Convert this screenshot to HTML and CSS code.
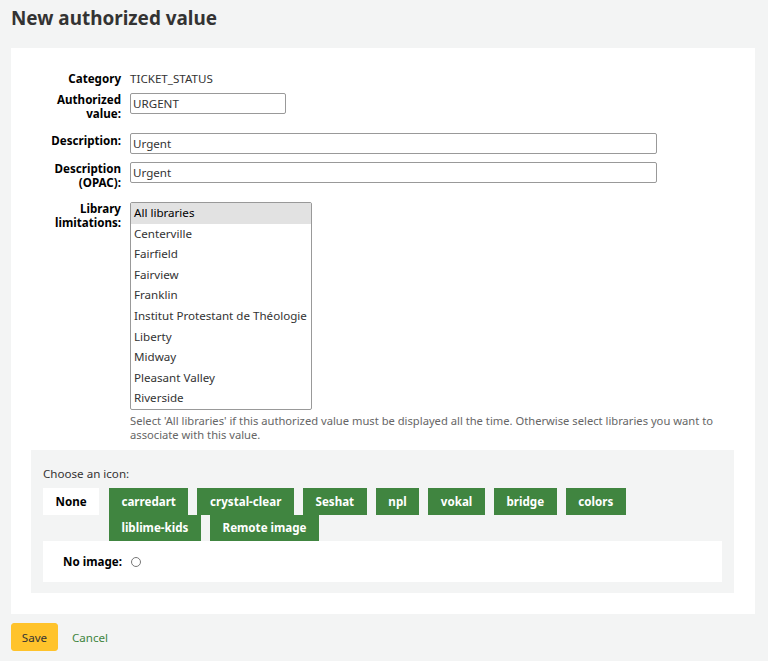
FILE: index.html
```html
<!DOCTYPE html>
<html>
<head>
<meta charset="utf-8">
<link rel="stylesheet" href="styles.css">
</head>
<body>
<main class="page">
  <h1 class="title">New authorized value</h1>
  <form class="panel">
    <ol class="rows">
      <li class="row">
        <span class="lbl">Category</span>
        <span class="val">TICKET_STATUS</span>
      </li>
      <li class="row">
        <label class="lbl two">Authorized value:</label>
        <input class="inp short" type="text" value="URGENT">
      </li>
      <li class="row">
        <label class="lbl">Description:</label>
        <input class="inp long" type="text" value="Urgent">
      </li>
      <li class="row">
        <label class="lbl two">Description (OPAC):</label>
        <input class="inp long" type="text" value="Urgent">
      </li>
      <li class="row">
        <label class="lbl two">Library limitations:</label>
        <div class="field">
          <div class="listbox">
            <div class="opt sel">All libraries</div>
            <div class="opt">Centerville</div>
            <div class="opt">Fairfield</div>
            <div class="opt">Fairview</div>
            <div class="opt">Franklin</div>
            <div class="opt">Institut Protestant de Théologie</div>
            <div class="opt">Liberty</div>
            <div class="opt">Midway</div>
            <div class="opt">Pleasant Valley</div>
            <div class="opt">Riverside</div>
          </div>
          <div class="hint">Select 'All libraries' if this authorized value must be displayed all the time. Otherwise select libraries you want to associate with this value.</div>
        </div>
      </li>
    </ol>
    <div class="icons">
      <div class="choose">Choose an icon:</div>
      <div class="tabs">
        <span class="tab active">None</span>
        <div class="tabset">
          <span class="tab">carredart</span>
          <span class="tab">crystal-clear</span>
          <span class="tab">Seshat</span>
          <span class="tab">npl</span>
          <span class="tab">vokal</span>
          <span class="tab">bridge</span>
          <span class="tab">colors</span>
          <span class="tab">liblime-kids</span>
          <span class="tab">Remote image</span>
        </div>
      </div>
      <div class="tabpanel">
        <span class="lbl noimg">No image:</span>
        <span class="radio"></span>
      </div>
    </div>
  </form>
  <div class="actions">
    <button class="save" type="button">Save</button>
    <a class="cancel" href="#">Cancel</a>
  </div>
</main>
</body>
</html>
```

FILE: styles.css
```css
html, body {
  margin: 0;
  padding: 0;
  background: #f3f4f4;
}
body {
  font-family: "Noto Sans", "DejaVu Sans", sans-serif;
  font-size: 11.6px;
  color: #333;
}
.page {
  padding: 0 13px 0 11px;
}
.title {
  margin: 0;
  padding-top: 4px;
  height: 48px;
  font-size: 18.9px;
  font-weight: 700;
  line-height: 28px;
  color: #333;
  box-sizing: border-box;
}
.panel {
  display: block;
  background: #fff;
  padding: 23px 21px 21px 20px;
}
.rows {
  list-style: none;
  margin: 0;
  padding: 0;
  display: flex;
  flex-direction: column;
  gap: 8px;
}
.row {
  display: flex;
  align-items: flex-start;
}
.row:first-child {
  padding-top: 1px;
  margin-bottom: -1px;
}
.lbl {
  width: 90px;
  margin-right: 9px;
  flex: none;
  text-align: right;
  font-weight: 700;
  color: #000;
  line-height: 14px;
}
.lbl.two {
  padding-bottom: 4px;
}
.val {
  line-height: 14px;
  color: #333;
}
.inp {
  font-family: inherit;
  font-size: 11.6px;
  color: #333;
  height: 21px;
  box-sizing: border-box;
  border: 1px solid #999;
  border-radius: 2px;
  padding: 0 2px;
  margin: 0;
  background: #fff;
  outline: none;
}
.inp.short { width: 156px; }
.inp.long { width: 527px; }
.row:nth-child(3) .lbl { padding-top: 1px; }
.field {
  display: flex;
  flex-direction: column;
}
.listbox {
  width: 182px;
  height: 208px;
  box-sizing: border-box;
  border: 1px solid #999;
  border-radius: 2px;
  overflow: hidden;
  background: #fff;
}
.opt {
  height: 20.6px;
  line-height: 20.6px;
  padding-left: 3px;
  color: #333;
  white-space: nowrap;
}
.opt.sel {
  background: #e2e2e2;
  color: #000;
}
.hint {
  margin-top: 4px;
  font-size: 11.2px;
  line-height: 14px;
  color: #666;
  width: 600px;
}
.icons {
  margin-top: 8px;
  background: #f3f4f4;
  padding: 17px 12px 11px 12px;
}
.choose {
  line-height: 14px;
  margin-bottom: 7px;
  color: #333;
}
.tabs {
  display: flex;
  align-items: flex-start;
}
.tab {
  display: block;
  height: 26px;
  line-height: 26px;
  padding: 0 12.6px;
  font-weight: 700;
  color: #fff;
  background: #408540;
  white-space: nowrap;
}
.tab.active {
  background: #fff;
  color: #000;
  height: 27px;
  line-height: 27px;
  margin-right: 9.5px;
}
.tabset {
  display: flex;
  flex-wrap: wrap;
  column-gap: 9px;
  row-gap: 0;
  width: 540px;
}
.tabset .tab:nth-child(-n+7) {
  height: 27px;
  line-height: 27px;
}
.tabpanel {
  background: #fff;
  height: 41px;
  display: flex;
  align-items: center;
}
.lbl.noimg {
  width: 79px;
  margin-right: 9px;
}
.radio {
  width: 8px;
  height: 8px;
  border: 1px solid #777;
  border-radius: 50%;
  background: #fff;
}
.actions {
  display: flex;
  align-items: center;
  padding-top: 9px;
}
.save {
  font-family: inherit;
  font-size: 11.6px;
  color: #333;
  background: #ffc32b;
  border: 1px solid #ffc32b;
  border-radius: 3px;
  width: 47px;
  height: 28px;
  padding: 0;
  margin: 0;
}
.cancel {
  margin-left: 14px;
  color: #408540;
  text-decoration: none;
}
```
